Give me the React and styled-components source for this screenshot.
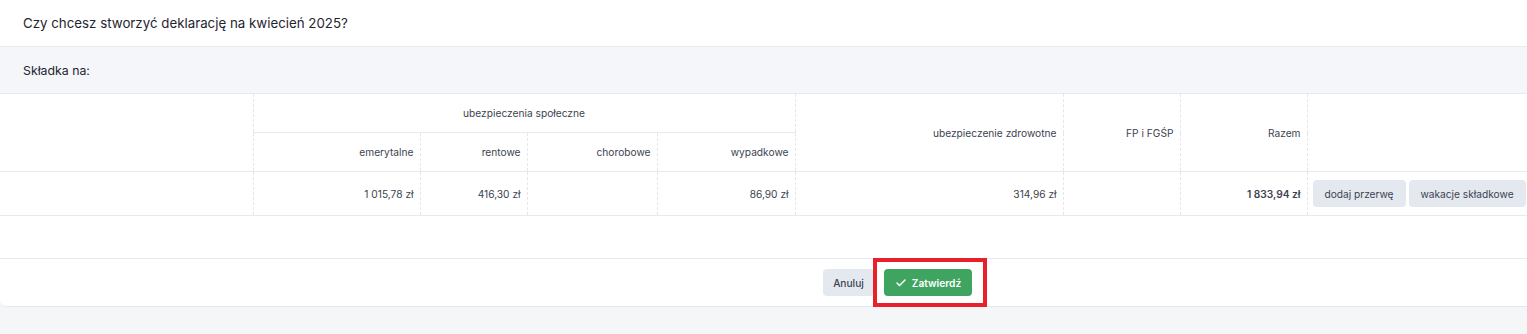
import styled, { createGlobalStyle } from 'styled-components';
import { Check } from 'lucide-react';

const GlobalStyle = createGlobalStyle`
  html, body {
    margin: 0;
    height: 100%;
    overflow: hidden;
    background: #f5f6f8;
  }
  body {
    font-family: Inter, "Noto Sans", sans-serif;
    color: #3c4250;
  }
`;

const Card = styled.div`
  width: 1795px;
  background: #fff;
  border-bottom: 1px solid #e6e8ee;
  border-bottom-left-radius: 6px;
`;

const Title = styled.div`
  height: 46px;
  padding: 0 23px;
  display: flex;
  align-items: center;
  font-size: 13.3px;
  color: #1f2430;
  border-bottom: 1px solid #e8eaef;
`;

const Band = styled.div`
  height: 46px;
  padding: 0 23px;
  display: flex;
  align-items: center;
  font-size: 12.3px;
  color: #1f2430;
  background: #f4f6f9;
  border-bottom: 1px solid #e8eaef;
`;

const Table = styled.table`
  width: 100%;
  border-collapse: collapse;
  table-layout: fixed;
  font-size: 10.2px;
  border-bottom: 1px solid #e8eaef;
`;

const Th = styled.th`
  font-weight: 400;
  color: #3c4250;
  text-align: ${p => p.$center ? 'center' : 'right'};
  padding: 0 6px;
  height: 38px;
  border-left: ${p => p.$noLeft ? 'none' : '1px dashed #e3e6ec'};
  border-bottom: ${p => p.$line ? '1px solid #e8eaef' : 'none'};
  vertical-align: middle;
`;

const HeadRow = styled.tr`
  &:last-child {
    border-bottom: 1px solid #e8eaef;
  }
`;

const Td = styled.td`
  height: 43px;
  padding: 0 6px;
  text-align: right;
  font-weight: ${p => p.$bold ? 600 : 400};
  color: #3c4250;
  border-left: ${p => p.$noLeft ? 'none' : '1px dashed #e3e6ec'};
`;

const Actions = styled.td`
  padding: 0 5px;
  border-left: 1px dashed #e3e6ec;
`;

const ActionRow = styled.div`
  display: flex;
  gap: 3px;
`;

const GreyButton = styled.button`
  height: 27px;
  width: ${p => p.$w}px;
  padding: 0;
  border: none;
  border-radius: 4px;
  background: #e4e9f0;
  color: #3c4250;
  font-family: inherit;
  font-size: 10.2px;
  font-weight: ${p => p.$weight || 400};
  cursor: pointer;
`;

const Spacer = styled.div`
  height: 42px;
  border-bottom: 1px solid #e8eaef;
`;

const Footer = styled.div`
  height: 47px;
  display: flex;
  align-items: center;
  justify-content: center;
  gap: 10px;
`;

const Highlight = styled.span`
  position: relative;
  display: inline-flex;

  &::after {
    content: '';
    position: absolute;
    top: -11px;
    bottom: -11px;
    left: -11px;
    right: -15px;
    border: 4px solid #e8202a;
    pointer-events: none;
  }
`;

const ConfirmButton = styled.button`
  height: 27px;
  width: 88px;
  display: inline-flex;
  align-items: center;
  justify-content: center;
  gap: 5px;
  padding: 0;
  border: none;
  border-radius: 4px;
  background: #3fa45f;
  color: #fff;
  font-family: inherit;
  font-size: 10.2px;
  font-weight: 600;
  cursor: pointer;
`;

const widths = [253, 167, 107, 130, 138, 268, 117, 127];

export default function App() {
  return (
    <>
      <GlobalStyle />
      <Card>
        <Title>Czy chcesz stworzyć deklarację na kwiecień 2025?</Title>
        <Band>Składka na:</Band>
        <Table>
          <colgroup>
            {widths.map((w, i) => <col key={i} style={{ width: w }} />)}
            <col />
          </colgroup>
          <thead>
            <tr>
              <Th rowSpan={2} $noLeft />
              <Th colSpan={4} $center $line>ubezpieczenia społeczne</Th>
              <Th rowSpan={2}>ubezpieczenie zdrowotne</Th>
              <Th rowSpan={2}>FP i FGŚP</Th>
              <Th rowSpan={2}>Razem</Th>
              <Th rowSpan={2} />
            </tr>
            <HeadRow>
              <Th>emerytalne</Th>
              <Th>rentowe</Th>
              <Th>chorobowe</Th>
              <Th>wypadkowe</Th>
            </HeadRow>
          </thead>
          <tbody>
            <tr>
              <Td $noLeft />
              <Td>1 015,78 zł</Td>
              <Td>416,30 zł</Td>
              <Td />
              <Td>86,90 zł</Td>
              <Td>314,96 zł</Td>
              <Td />
              <Td $bold>1 833,94 zł</Td>
              <Actions>
                <ActionRow>
                  <GreyButton $w={93}>dodaj przerwę</GreyButton>
                  <GreyButton $w={117}>wakacje składkowe</GreyButton>
                </ActionRow>
              </Actions>
            </tr>
          </tbody>
        </Table>
        <Spacer />
        <Footer>
          <GreyButton $w={51} $weight={500}>Anuluj</GreyButton>
          <Highlight>
            <ConfirmButton>
              <Check size={12} strokeWidth={3} />
              Zatwierdź
            </ConfirmButton>
          </Highlight>
        </Footer>
      </Card>
    </>
  );
}
